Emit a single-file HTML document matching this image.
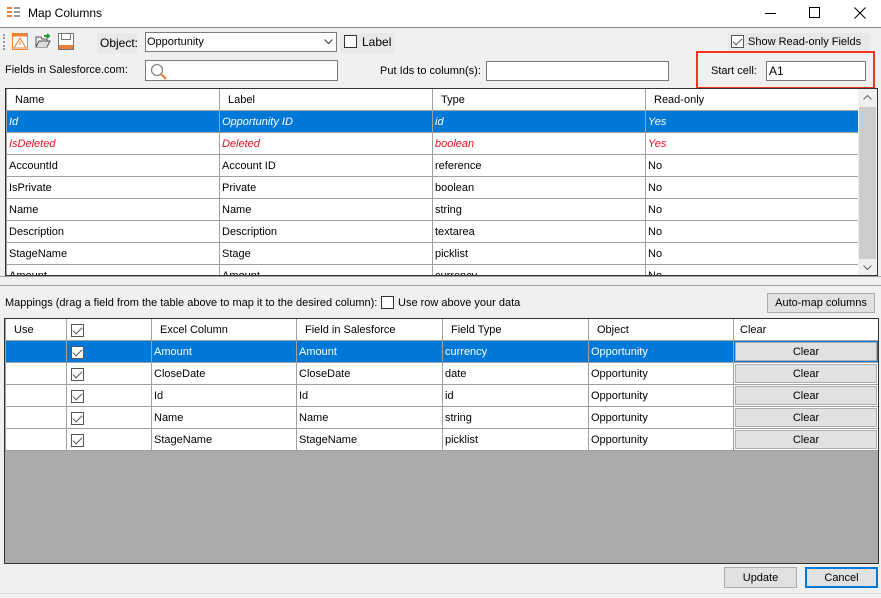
<!DOCTYPE html>
<html><head><style>
*{box-sizing:border-box;margin:0;padding:0}
body{width:881px;height:598px;background:#f0f0f0;font-family:"Liberation Sans",sans-serif;font-size:11px;color:#000;position:relative;overflow:hidden}
.a{position:absolute}
.t{position:absolute;white-space:nowrap;line-height:14px}
.box{position:absolute;background:#fff;border:1px solid #7a7a7a}
.cb{position:absolute;width:13px;height:13px;border:1px solid #333;background:#fff}
table{border-collapse:collapse;table-layout:fixed;position:absolute}
td{border:1px solid #a0a0a0;height:22px;padding:2px 2px 0;white-space:nowrap;overflow:hidden;font-size:11px;vertical-align:middle}
tr.h td{height:21px;border-top:none}
.sel td{background:#0078d7;color:#fff}
.it td{font-style:italic}
.red td{color:#e81123}
.btn{position:absolute;background:#e1e1e1;border:1px solid #adadad;text-align:center;line-height:20px}
.chk{display:inline-block;width:13px;height:13px;border:1px solid #555;background:#fff;vertical-align:middle;position:relative}
.chk:after{content:"";position:absolute;left:3px;top:0px;width:4px;height:8px;border:solid #555;border-width:0 1px 1px 0;transform:rotate(45deg)}
.cl{background:#e1e1e1;border:1px solid #adadad;color:#000;text-align:center;height:19px;line-height:18px}
td.c{padding:1px}
</style></head><body>
<div class="a" style="left:0;top:0;width:881px;height:28px;background:#fff;border-bottom:1px solid #8a8a8a"></div>
<svg class="a" style="left:7px;top:6px" width="16" height="14"><g fill="#e8833a"><rect x="0" y="1" width="5" height="2"/><rect x="0" y="5" width="5" height="2"/><rect x="0" y="9" width="5" height="2"/><rect x="7" y="1" width="6" height="2" fill="#999"/><rect x="7" y="5" width="6" height="2" fill="#999"/><rect x="7" y="9" width="6" height="2" fill="#999"/></g></svg>
<div class="t" style="left:28px;top:6px;font-size:12px">Map Columns</div>
<div class="a" style="left:765px;top:13px;width:11px;height:1px;background:#000"></div>
<div class="a" style="left:809px;top:7px;width:11px;height:11px;border:1px solid #000"></div>
<svg class="a" style="left:854px;top:7px" width="12" height="12"><path d="M0.5 0.5 L11.5 11.5 M11.5 0.5 L0.5 11.5" stroke="#000"/></svg>
<div class="a" style="left:3px;top:34px;width:2px;height:16px;border-left:2px dotted #999"></div>
<svg class="a" style="left:12px;top:33px" width="16" height="17"><rect x="0.5" y="0.5" width="15" height="16" fill="#fff" stroke="#e8833a"/><rect x="0.5" y="0.5" width="15" height="3" fill="#e8833a"/><path d="M8 5 L14 15 L2 15 Z" fill="none" stroke="#e8833a"/><rect x="7.5" y="8" width="1" height="4" fill="#e8833a"/></svg>
<svg class="a" style="left:35px;top:33px" width="17" height="16"><path d="M1 4 H6 L7 6 H12 V14 H1 Z" fill="#eee" stroke="#555"/><path d="M1 14 L4 8 H15 L12 14" fill="#ddd" stroke="#555"/><path d="M9 3 H14 M12 1 L14 3 L12 5" stroke="#2a9d3a" stroke-width="2" fill="none"/></svg>
<svg class="a" style="left:58px;top:33px" width="16" height="17"><rect x="0.5" y="0.5" width="15" height="16" fill="#fff" stroke="#777"/><rect x="3.5" y="0.5" width="9" height="6" fill="#fff" stroke="#777"/><rect x="1" y="12" width="14" height="4" fill="#e8833a"/></svg>
<div class="a" style="left:97px;top:33px;width:40px;height:20px;background:#e8e8e8"></div>
<div class="t" style="left:100px;top:36px;font-size:12px">Object:</div>
<div class="box" style="left:145px;top:32px;width:192px;height:20px"><span class="t" style="left:1px;top:2px">Opportunity</span><svg class="a" style="left:178px;top:6px" width="9" height="6"><path d="M0.5 0.5 L4.5 4.5 L8.5 0.5" stroke="#333" fill="none"/></svg></div>
<div class="a" style="left:340px;top:33px;width:55px;height:20px;background:#e8e8e8"></div>
<div class="cb" style="left:344px;top:35px"></div>
<div class="t" style="left:362px;top:35px;font-size:12px">Label</div>
<div class="a" style="left:728px;top:33px;width:142px;height:20px;background:#e8e8e8"></div>
<div class="a" style="left:731px;top:35px"><span class="chk"></span></div>
<div class="t" style="left:748px;top:35px">Show Read-only Fields</div>
<div class="t" style="left:5px;top:63px">Fields in Salesforce.com:</div>
<div class="box" style="left:145px;top:60px;width:193px;height:21px"></div>
<svg class="a" style="left:150px;top:63px" width="18" height="18"><circle cx="7" cy="7" r="5.5" fill="none" stroke="#888" stroke-width="1.3"/><path d="M11 11 L16 16" stroke="#e8833a" stroke-width="2.2"/></svg>
<div class="t" style="left:380px;top:64px">Put Ids to column(s):</div>
<div class="box" style="left:486px;top:61px;width:183px;height:20px"></div>
<div class="a" style="left:696px;top:51px;width:179px;height:38px;border:2px solid #f4361f"></div>
<div class="t" style="left:711px;top:64px">Start cell:</div>
<div class="box" style="left:766px;top:61px;width:100px;height:20px"><span class="t" style="left:2px;top:2px;font-size:12px">A1</span></div>
<div class="a" style="left:5px;top:88px;width:873px;height:188px;background:#fff;border:1px solid #333;overflow:hidden">
<table style="left:0;top:0;width:853px">
<colgroup><col style="width:213px"><col style="width:213px"><col style="width:213px"><col style="width:214px"></colgroup>
<tr class="h"><td style="padding-left:8px">Name</td><td style="padding-left:8px">Label</td><td style="padding-left:8px">Type</td><td style="padding-left:8px">Read-only</td></tr>
<tr class="sel it"><td>Id</td><td>Opportunity ID</td><td>id</td><td>Yes</td></tr>
<tr class="red it"><td>IsDeleted</td><td>Deleted</td><td>boolean</td><td>Yes</td></tr>
<tr><td>AccountId</td><td>Account ID</td><td>reference</td><td>No</td></tr>
<tr><td>IsPrivate</td><td>Private</td><td>boolean</td><td>No</td></tr>
<tr><td>Name</td><td>Name</td><td>string</td><td>No</td></tr>
<tr><td>Description</td><td>Description</td><td>textarea</td><td>No</td></tr>
<tr><td>StageName</td><td>Stage</td><td>picklist</td><td>No</td></tr>
<tr><td>Amount</td><td>Amount</td><td>currency</td><td>No</td></tr>
</table>
<div class="a" style="left:852px;top:0;width:19px;height:186px;background:#f0f0f0"></div>
<div class="a" style="left:853px;top:18px;width:17px;height:152px;background:#cdcdcd"></div>
<svg class="a" style="left:857px;top:6px" width="9" height="6"><path d="M0.5 4.5 L4.5 0.5 L8.5 4.5" stroke="#666" fill="none"/></svg>
<svg class="a" style="left:857px;top:176px" width="9" height="6"><path d="M0.5 0.5 L4.5 4.5 L8.5 0.5" stroke="#666" fill="none"/></svg>
</div>
<div class="a" style="left:0;top:276px;width:881px;height:1px;background:#a0a0a0"></div>
<div class="a" style="left:0;top:285px;width:881px;height:1px;background:#a0a0a0"></div>
<div class="t" style="left:5px;top:296px">Mappings (drag a field from the table above to map it to the desired column):</div>
<div class="cb" style="left:381px;top:296px"></div>
<div class="t" style="left:398px;top:296px">Use row above your data</div>
<div class="btn" style="left:767px;top:293px;width:108px;height:20px;line-height:18px">Auto-map columns</div>
<div class="a" style="left:4px;top:318px;width:875px;height:246px;background:#ababab;border:1px solid #333;overflow:hidden">
<table style="left:0;top:0;width:873px;background:#fff">
<colgroup><col style="width:61px"><col style="width:85px"><col style="width:145px"><col style="width:146px"><col style="width:146px"><col style="width:145px"><col style="width:145px"></colgroup>
<tr class="h"><td style="padding-left:8px">Use</td><td style="padding-left:4px"><span class="chk"></span></td><td style="padding-left:8px">Excel Column</td><td style="padding-left:8px">Field in Salesforce</td><td style="padding-left:8px">Field Type</td><td style="padding-left:8px">Object</td><td style="padding-left:6px">Clear</td></tr>
<tr class="sel"><td></td><td style="padding-left:4px"><span class="chk"></span></td><td>Amount</td><td>Amount</td><td>currency</td><td>Opportunity</td><td class="c" style="background:#fff"><div class="cl" style="outline:1px solid #0078d7">Clear</div></td></tr>
<tr><td></td><td style="padding-left:4px"><span class="chk"></span></td><td>CloseDate</td><td>CloseDate</td><td>date</td><td>Opportunity</td><td class="c"><div class="cl">Clear</div></td></tr>
<tr><td></td><td style="padding-left:4px"><span class="chk"></span></td><td>Id</td><td>Id</td><td>id</td><td>Opportunity</td><td class="c"><div class="cl">Clear</div></td></tr>
<tr><td></td><td style="padding-left:4px"><span class="chk"></span></td><td>Name</td><td>Name</td><td>string</td><td>Opportunity</td><td class="c"><div class="cl">Clear</div></td></tr>
<tr><td></td><td style="padding-left:4px"><span class="chk"></span></td><td>StageName</td><td>StageName</td><td>picklist</td><td>Opportunity</td><td class="c"><div class="cl">Clear</div></td></tr>
</table>
</div>
<div class="btn" style="left:724px;top:567px;width:73px;height:21px">Update</div>
<div class="btn" style="left:805px;top:567px;width:73px;height:21px;border:2px solid #0078d7;line-height:18px">Cancel</div>
<div class="a" style="left:0;top:593px;width:881px;height:1px;background:#d8d8d8"></div>
</body></html>
